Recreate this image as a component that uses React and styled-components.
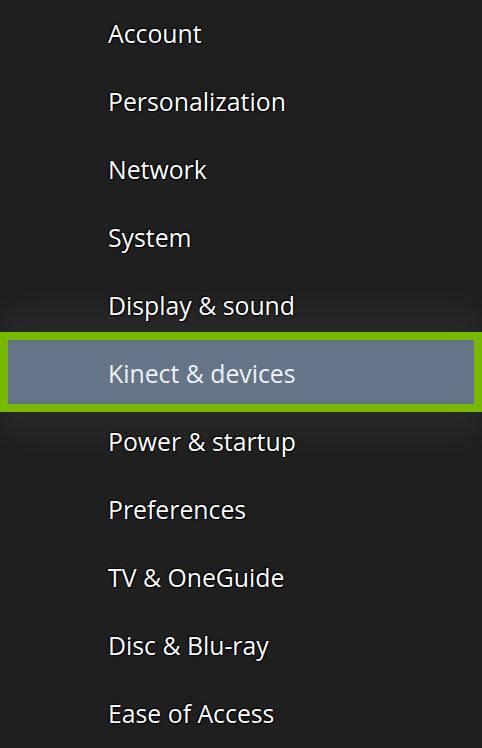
import { createGlobalStyle } from "styled-components";
import styled from "styled-components";

const GlobalStyle = createGlobalStyle`
  body {
    margin: 0;
    background-color: #1f1f1f;
    font-family: "Open Sans", "Noto Sans", sans-serif;
  }
`;

const Menu = styled.ul`
  list-style: none;
  margin: 0;
  padding: 0;
  width: 482px;
  height: 748px;
  overflow: hidden;
  background-color: #1f1f1f;
`;

const Item = styled.li`
  box-sizing: border-box;
  display: flex;
  align-items: center;
  height: 68px;
  padding-left: 108px;
  padding-bottom: 2px;
  font-size: 24.8px;
  font-weight: 500;
  color: #ffffff;
  text-shadow: 0 0 2px #000, 1px 1px 1px #000, -1px -1px 1px #000;
  position: relative;
`;

const SelectedItem = styled(Item)`
  height: 80px;
  margin: -8px 0 -4px;
  padding-top: 2px;
  padding-bottom: 0;
  padding-left: 100px;
  border: 8px solid #76b900;
  background-color: #657487;
  color: #eef1f5;
  font-weight: 400;
  text-shadow: none;
  z-index: 1;
  box-shadow: 0 -20px 40px rgba(255, 255, 255, 0.05), 0 20px 40px rgba(255, 255, 255, 0.05);
`;

const items = [
  "Account",
  "Personalization",
  "Network",
  "System",
  "Display & sound",
  "Kinect & devices",
  "Power & startup",
  "Preferences",
  "TV & OneGuide",
  "Disc & Blu-ray",
  "Ease of Access",
];

const selected = "Kinect & devices";

const App = () => {
  return (
    <>
      <GlobalStyle />
      <Menu>
        {items.map((name) =>
          name === selected ? (
            <SelectedItem key={name}>{name}</SelectedItem>
          ) : (
            <Item key={name}>{name}</Item>
          )
        )}
      </Menu>
    </>
  );
};

export default App;
